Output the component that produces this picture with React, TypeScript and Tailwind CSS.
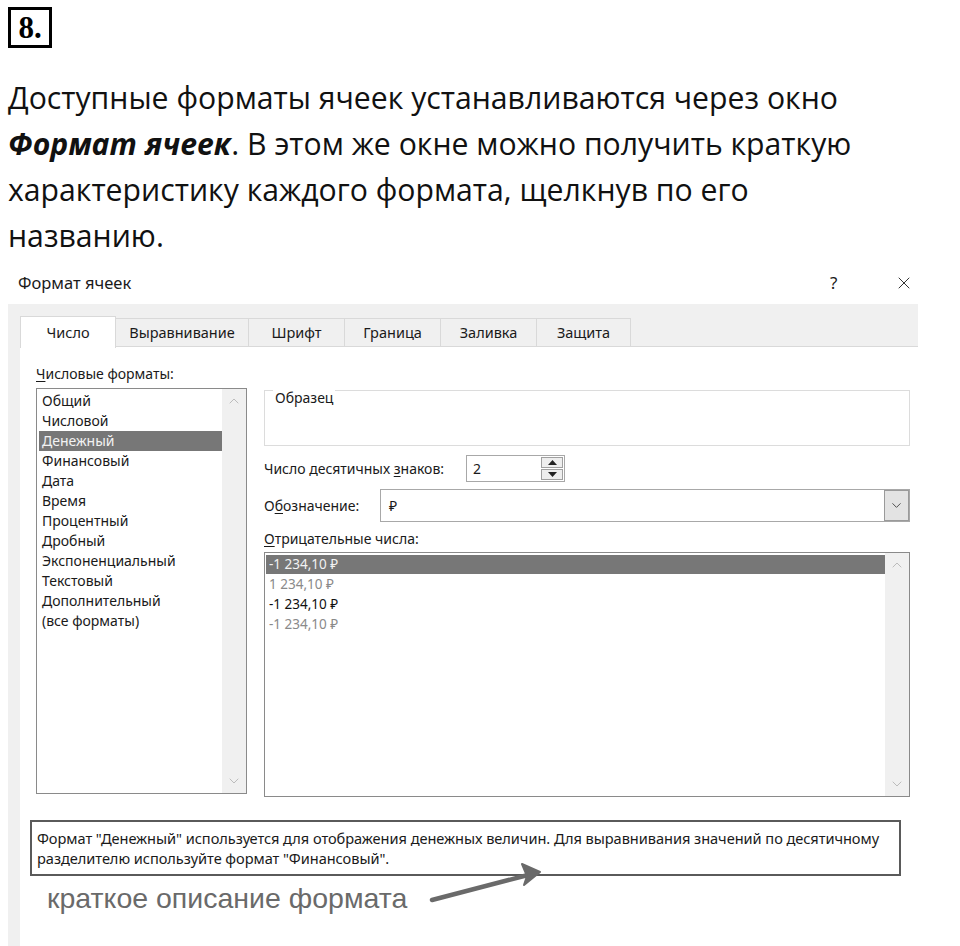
import { ChevronUp, ChevronDown, X } from 'lucide-react';

const formats = [
  'Общий',
  'Числовой',
  'Денежный',
  'Финансовый',
  'Дата',
  'Время',
  'Процентный',
  'Дробный',
  'Экспоненциальный',
  'Текстовый',
  'Дополнительный',
  '(все форматы)',
];

const tabs = ['Число', 'Выравнивание', 'Шрифт', 'Граница', 'Заливка', 'Защита'];
const tabWidths = ['w-[96px]', 'w-[133px]', 'w-[96px]', 'w-[96px]', 'w-[96px]', 'w-[94px]'];

function ScrollTrack({ className }: { className?: string }) {
  return (
    <div className={`w-[24px] bg-[#f0f0f0] flex flex-col items-center justify-between py-[4px] ${className ?? ''}`}>
      <ChevronUp size={16} strokeWidth={1.5} className="text-[#bcbcbc]" />
      <ChevronDown size={16} strokeWidth={1.5} className="text-[#bcbcbc]" />
    </div>
  );
}

export default function App() {
  return (
    <div className="relative w-[960px] h-[946px] bg-white overflow-hidden text-black">
      {/* task number */}
      <div className="pt-[7px] pl-[8px]">
        <div className="w-[44px] h-[41px] border-[3px] border-black flex items-center justify-center font-['Liberation_Serif',serif] font-bold text-[31px] leading-none">
          8.
        </div>
      </div>

      {/* intro paragraph */}
      <p className="mt-[27px] pl-[8px] font-['Open_Sans',sans-serif] text-[30.2px] leading-[46px] text-[#111]">
        Доступные форматы ячеек устанавливаются через окно
        <br />
        <b className="italic">Формат ячеек</b>. В этом же окне можно получить краткую
        <br />
        характеристику каждого формата, щелкнув по его
        <br />
        названию.
      </p>

      {/* dialog */}
      <div className="mt-[3px] font-['Noto_Sans',sans-serif] text-[#1a1a1a]">
        <div className="h-[42px] flex items-center pl-[18px] pr-[46px] text-[16.5px]">
          <span className="flex-1">Формат ячеек</span>
          <span className="w-[64px] text-[17px]">?</span>
          <X size={20} strokeWidth={1.2} className="text-[#333]" />
        </div>

        <div className="ml-[8px] w-[910px] bg-[#f0f0f0] pl-[12px] pt-[12px]">
          {/* tabs */}
          <div className="flex h-[31px] border-b border-[#d9d9d9]">
            {tabs.map((t, i) => (
              <div
                key={t}
                className={`${tabWidths[i]} flex items-center justify-center text-[14.5px] border-t border-r border-[#d9d9d9] ${
                  i === 0 ? 'bg-white border-l -mb-px h-[32px]' : 'mt-[2px]'
                }`}
              >
                {t}
              </div>
            ))}
          </div>

          {/* content panel */}
          <div className="bg-white h-[601px] pl-[16px] pr-[8px] pt-[17px] text-[14px]">
            <div className="flex gap-[17px]">
              {/* left column */}
              <div className="w-[211px]">
                <div className="h-[20px] leading-[20px]">
                  <span className="underline underline-offset-2">Ч</span>исловые форматы:
                </div>
                <div className="mt-[4px] h-[406px] border border-[#8a8a8a] flex">
                  <div className="flex-1 pt-[2px] pl-[2px]">
                    {formats.map((f) => (
                      <div
                        key={f}
                        className={`h-[20px] leading-[20px] pl-[3px] ${
                          f === 'Денежный' ? 'bg-[#777777] text-[#f2f2f2]' : ''
                        }`}
                      >
                        {f}
                      </div>
                    ))}
                  </div>
                  <ScrollTrack />
                </div>
              </div>

              {/* right column */}
              <div className="flex-1 pt-[26px]">
                <div className="relative h-[56px] border border-[#dcdcdc]">
                  <span className="absolute left-[8px] top-[-3px] bg-white px-[2px] leading-[20px]">
                    Образец
                  </span>
                </div>

                <div className="mt-[9px] flex items-center h-[27px]">
                  <span className="w-[202px]">
                    Число десятичных <span className="underline underline-offset-2">з</span>наков:
                  </span>
                  <div className="w-[99px] h-[27px] border border-[#a8a8a8] flex items-center">
                    <span className="flex-1 pl-[6px]">2</span>
                    <div className="w-[22px] h-[23px] mr-[1px] flex flex-col gap-[1px]">
                      <div className="flex-1 border border-[#a0a0a0] bg-[#eeeeee] flex items-center justify-center">
                        <svg width="9" height="5" viewBox="0 0 9 5"><path d="M0 5 L4.5 0 L9 5 Z" fill="#222" /></svg>
                      </div>
                      <div className="flex-1 border border-[#a0a0a0] bg-[#eeeeee] flex items-center justify-center">
                        <svg width="9" height="5" viewBox="0 0 9 5"><path d="M0 0 L4.5 5 L9 0 Z" fill="#222" /></svg>
                      </div>
                    </div>
                  </div>
                </div>

                <div className="mt-[7px] flex items-center h-[33px]">
                  <span className="w-[116px]">
                    О<span className="underline underline-offset-2">б</span>означение:
                  </span>
                  <div className="flex-1 h-[33px] border border-[#a8a8a8] flex items-center">
                    <span className="flex-1 pl-[8px]">₽</span>
                    <div className="w-[25px] h-[31px] bg-[#e3e3e3] border border-[#9a9a9a] flex items-center justify-center">
                      <ChevronDown size={15} strokeWidth={1.5} className="text-[#444]" />
                    </div>
                  </div>
                </div>

                <div className="mt-[7px] h-[20px] leading-[20px]">
                  <span className="underline underline-offset-2">О</span>трицательные числа:
                </div>
                <div className="mt-[3px] h-[245px] border border-[#8a8a8a] flex">
                  <div className="flex-1 pt-[2px] pl-[1px] text-[13.5px]">
                    <div className="h-[19px] leading-[19px] pl-[3px] bg-[#777777] text-[#f2f2f2]">-1 234,10 ₽</div>
                    <div className="h-[20px] leading-[20px] pl-[3px] text-[#8a8a8a]">1 234,10 ₽</div>
                    <div className="h-[20px] leading-[20px] pl-[3px] text-[#111]">-1 234,10 ₽</div>
                    <div className="h-[20px] leading-[20px] pl-[3px] text-[#8a8a8a]">-1 234,10 ₽</div>
                  </div>
                  <ScrollTrack />
                </div>
              </div>
            </div>

            {/* description */}
            <div className="-ml-[6px] mt-[23px] w-[871px] h-[56px] border-2 border-[#5a5a5a] px-[5px] pt-[6px] text-[14.6px] leading-[20px] tracking-[-0.05px] whitespace-nowrap text-[#1a1a1a]">
              Формат "Денежный" используется для отображения денежных величин. Для выравнивания значений по десятичному
              <br />
              разделителю используйте формат "Финансовый".
            </div>

            <div className="ml-[11px] mt-[4px] font-['Liberation_Sans',sans-serif] text-[28.5px] leading-[36px] text-[#6a6a6a]">
              краткое описание формата
            </div>
          </div>
        </div>
      </div>

      {/* annotation arrow */}
      <svg className="absolute left-0 top-0 pointer-events-none" width="960" height="946">
        <path d="M432 900 L528 875" stroke="#6a6a6a" strokeWidth="4.5" strokeLinecap="round" />
        <path d="M540 872 L522 864 L527 876 L524 885 Z" fill="#6a6a6a" stroke="#6a6a6a" strokeWidth="2" strokeLinejoin="round" />
      </svg>
    </div>
  );
}
